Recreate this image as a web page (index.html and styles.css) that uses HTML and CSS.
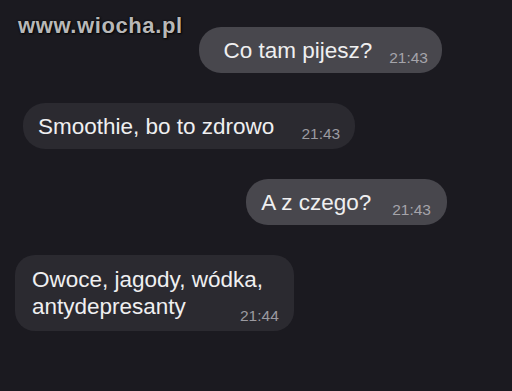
FILE: index.html
```html
<!DOCTYPE html>
<html lang="pl">
<head>
    <meta charset="UTF-8">
    <meta name="viewport" content="width=device-width, initial-scale=1.0">
    <title>Czat</title>
    <link rel="stylesheet" href="styles.css">
</head>
<body>
    <div class="screen">
        <div class="watermark">www.wiocha.pl</div>

        <div class="chat">
            <div class="msg msg--out msg--first">
                <span class="msg-text">Co tam pijesz?</span>
                <span class="msg-time">21:43</span>
            </div>

            <div class="msg msg--in msg--wide">
                <span class="msg-text">Smoothie, bo to zdrowo</span>
                <span class="msg-time">21:43</span>
            </div>

            <div class="msg msg--out msg--shift">
                <span class="msg-text">A z czego?</span>
                <span class="msg-time">21:43</span>
            </div>

            <div class="msg msg--in msg--multi">
                <span class="msg-text">Owoce, jagody, wódka,<br>antydepresanty</span>
                <span class="msg-time">21:44</span>
            </div>
        </div>
    </div>
</body>
</html>
```

FILE: styles.css
```css
:root {
    --bg-color: #1b1a20;
    --bubble-out: #48474d;
    --bubble-in: #2b2a30;
    --text-color: #efeff0;
    --time-color: #a5a4aa;
    --mark-color: #b8b8b8;
}

* {
    margin: 0;
    padding: 0;
    box-sizing: border-box;
}

body {
    width: 512px;
    height: 391px;
    overflow: hidden;
    background-color: var(--bg-color);
    color: var(--text-color);
    font-family: "Liberation Sans", Arial, sans-serif;
}

.screen {
    position: relative;
    height: 100%;
}

/* znak wodny nad rozmową */
.watermark {
    position: absolute;
    top: 15px;
    left: 18px;
    font-size: 22px;
    line-height: 22px;
    font-weight: 700;
    letter-spacing: 0.6px;
    color: var(--mark-color);
    text-shadow: 0 0 2px #000, 1px 1px 2px rgba(0, 0, 0, 0.8);
}

.chat {
    display: flex;
    flex-direction: column;
    gap: 30px;
    padding: 27px 70px 0 23px;
}

.msg {
    display: flex;
    align-items: flex-end;
    gap: 21px;
    padding: 10px 16px 9px 15px;
    border-radius: 22px;
}

.msg--out {
    align-self: flex-end;
    background: var(--bubble-out);
}

.msg--in {
    align-self: flex-start;
    background: var(--bubble-in);
}

.msg--first {
    padding-left: 24px;
    padding-right: 14px;
    gap: 17px;
}

.msg--wide {
    gap: 27px;
    padding-right: 15px;
}

.msg--shift {
    margin-right: -5px;
}

.msg-text {
    font-size: 22.5px;
    line-height: 27px;
    white-space: nowrap;
}

.msg-time {
    font-size: 15.5px;
    line-height: 12px;
    color: var(--time-color);
}

.msg--in .msg-time {
    color: #9b9aa0;
}

.msg--multi {
    margin-left: -8px;
    padding: 11px 15px 11px 17px;
    border-radius: 20px;
}

.msg--multi .msg-time {
    margin-left: -44px;
    margin-bottom: -2px;
}
```
